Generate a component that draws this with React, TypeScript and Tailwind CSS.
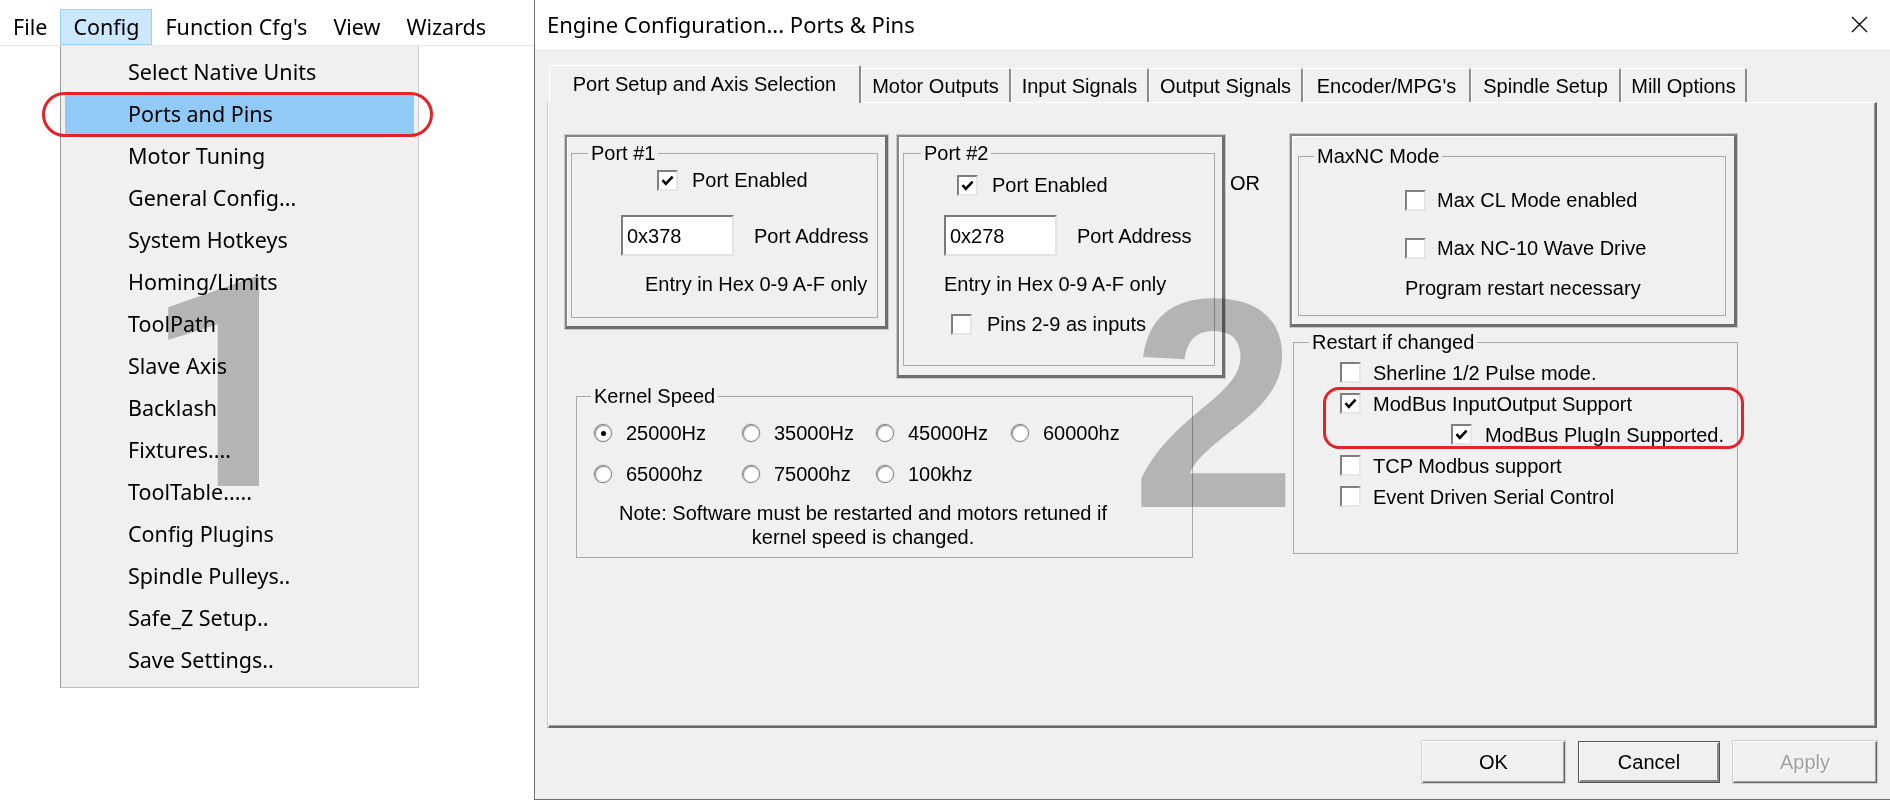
import React from "react";

const menuItems = [
  "Select Native Units",
  "Ports and Pins",
  "Motor Tuning",
  "General Config...",
  "System Hotkeys",
  "Homing/Limits",
  "ToolPath",
  "Slave Axis",
  "Backlash",
  "Fixtures....",
  "ToolTable.....",
  "Config Plugins",
  "Spindle Pulleys..",
  "Safe_Z Setup..",
  "Save Settings..",
];

function Check({ checked = false }: { checked?: boolean }) {
  return (
    <span className="w-[21px] h-[21px] shrink-0 bg-white border-2 border-t-[#7f7f7f] border-l-[#7f7f7f] border-r-[#e6e6e6] border-b-[#e6e6e6] flex items-center justify-center">
      {checked && (
        <svg width="13" height="11" viewBox="0 0 13 11">
          <path d="M1.5 5.2 L4.8 8.8 L11.6 1.6" fill="none" stroke="#000" strokeWidth="2.6" />
        </svg>
      )}
    </span>
  );
}

function Radio({ checked = false }: { checked?: boolean }) {
  return (
    <span className="w-[18px] h-[18px] shrink-0 rounded-full bg-white border border-[#808080] shadow-[inset_1px_1px_1px_#9a9a9a,0_0_0_1px_#e0e0e0] flex items-center justify-center">
      {checked && <span className="w-[5px] h-[5px] rounded-full bg-black" />}
    </span>
  );
}

function TextBox({ value }: { value: string }) {
  return (
    <div className="w-[113px] h-[41px] shrink-0 bg-white border-2 border-t-[#7a7a7a] border-l-[#7a7a7a] border-r-[#e3e3e3] border-b-[#e3e3e3] flex items-center pl-[4px]">
      {value}
    </div>
  );
}

function Tab({ label, w }: { label: string; w: number }) {
  return (
    <div
      className="h-[34px] shrink-0 flex items-center justify-center border-t border-l border-white border-r-2 border-r-[#8a8a8a] bg-[#f0f0f0] rounded-t-[2px]"
      style={{ width: w }}
    >
      {label}
    </div>
  );
}

function RadioItem({ label, checked = false }: { label: string; checked?: boolean }) {
  return (
    <div className="flex items-center h-[24px]">
      <Radio checked={checked} />
      <span className="ml-[14px]">{label}</span>
    </div>
  );
}

export default function App() {
  return (
    <div className="relative w-[1890px] h-[800px] bg-white flex overflow-hidden text-black">
      {/* Left: menu bar + dropdown */}
      <div className="w-[534px] shrink-0 flex flex-col font-['Noto_Sans',sans-serif] text-[21.5px]">
        <div className="h-[46px] pt-[9px] flex border-b border-[#e6e6e6]">
          <div className="h-[36px] px-[13px] flex items-center">File</div>
          <div className="h-[36px] px-[12px] flex items-center bg-[#cce8ff] border border-[#99d1ff]">Config</div>
          <div className="h-[36px] px-[13px] flex items-center">Function Cfg's</div>
          <div className="h-[36px] px-[13px] flex items-center">View</div>
          <div className="h-[36px] px-[13px] flex items-center">Wizards</div>
        </div>
        <div className="ml-[60px] w-[359px] h-[642px] bg-[#f0f0f0] border-l border-l-[#9a9a9a] border-r border-b border-r-[#cccccc] border-b-[#bdbdbd] pt-[5px] flex flex-col">
          {menuItems.map((m, i) => (
            <div
              key={m}
              className={
                "h-[42px] mx-[4px] pl-[63px] flex items-center " + (i === 1 ? "bg-[#91c9f7]" : "")
              }
            >
              {m}
            </div>
          ))}
        </div>
      </div>

      {/* Dialog */}
      <div className="flex-1 h-[800px] flex flex-col bg-[#f0f0f0] border-l border-[#6f6f6f] border-b border-b-[#6f6f6f]">
        <div className="h-[49px] shrink-0 bg-white flex items-center justify-between pl-[12px] pr-[22px] font-['Noto_Sans',sans-serif] text-[22px]">
          <span>Engine Configuration... Ports &amp; Pins</span>
          <svg width="17" height="17" viewBox="0 0 17 17">
            <path d="M1 1 L16 16 M16 1 L1 16" stroke="#000" strokeWidth="1.3" fill="none" />
          </svg>
        </div>

        <div className="flex-1 px-[13px] pt-[16px] flex flex-col font-['Liberation_Sans',Arial,sans-serif] text-[20px] leading-[24px]">
          {/* Tabs */}
          <div className="h-[37px] flex items-end pl-[1px] relative z-10">
            <div className="w-[312px] h-[38px] -mb-[1px] shrink-0 flex items-start pt-[6px] justify-center border-t border-l border-white border-r-2 border-r-[#8a8a8a] bg-[#f0f0f0] rounded-t-[2px]">
              Port Setup and Axis Selection
            </div>
            <Tab label="Motor Outputs" w={150} />
            <Tab label="Input Signals" w={138} />
            <Tab label="Output Signals" w={154} />
            <Tab label="Encoder/MPG's" w={168} />
            <Tab label="Spindle Setup" w={150} />
            <Tab label="Mill Options" w={126} />
          </div>

          {/* Panel */}
          <div className="h-[626px] shrink-0 border-l border-t border-white border-r-2 border-b-2 border-r-[#696969] border-b-[#696969] shadow-[inset_-1px_-1px_0_#a0a0a0,-1px_0_0_#c8c8c8] pl-[16px] pt-[32px] flex">
            {/* Left column */}
            <div className="w-[660px] shrink-0 flex flex-col">
              <div className="flex items-start gap-[9px]">
                {/* Port #1 */}
                <div className="w-[323px] h-[194px] shrink-0 border-2 border-r-[3px] border-b-[3px] border-[#858585] border-r-[#6e6e6e] border-b-[#6e6e6e] outline outline-1 outline-[#c8c8c8] shadow-[inset_1px_1px_0_#ffffff] pl-[4px] pt-[4px]">
                  <fieldset className="w-[307px] h-[177px] border border-[#a9a9a9] flex flex-col">
                    <legend className="ml-[16px] px-[3px] leading-[24px]">Port #1</legend>
                    <div className="mt-[3px] h-[24px] pl-[85px] flex items-center">
                      <Check checked />
                      <span className="ml-[14px]">Port Enabled</span>
                    </div>
                    <div className="mt-[23px] pl-[49px] flex items-center">
                      <TextBox value="0x378" />
                      <span className="ml-[20px]">Port Address</span>
                    </div>
                    <div className="mt-[16px] h-[24px] pl-[73px]">Entry in Hex 0-9 A-F only</div>
                  </fieldset>
                </div>
                {/* Port #2 */}
                <div className="w-[328px] h-[243px] shrink-0 border-2 border-r-[3px] border-b-[3px] border-[#858585] border-r-[#6e6e6e] border-b-[#6e6e6e] outline outline-1 outline-[#c8c8c8] shadow-[inset_1px_1px_0_#ffffff] pl-[4px] pt-[4px]">
                  <fieldset className="w-[312px] h-[225px] border border-[#a9a9a9] flex flex-col">
                    <legend className="ml-[17px] px-[3px] leading-[24px]">Port #2</legend>
                    <div className="mt-[8px] h-[24px] pl-[53px] flex items-center">
                      <Check checked />
                      <span className="ml-[14px]">Port Enabled</span>
                    </div>
                    <div className="mt-[18px] pl-[40px] flex items-center">
                      <TextBox value="0x278" />
                      <span className="ml-[20px]">Port Address</span>
                    </div>
                    <div className="mt-[16px] h-[24px] pl-[40px]">Entry in Hex 0-9 A-F only</div>
                    <div className="mt-[16px] h-[24px] pl-[47px] flex items-center">
                      <Check />
                      <span className="ml-[15px]">Pins 2-9 as inputs</span>
                    </div>
                  </fieldset>
                </div>
              </div>

              {/* Kernel Speed */}
              <fieldset className="mt-[6px] ml-[11px] w-[617px] h-[174px] border border-[#a9a9a9] flex flex-col">
                <legend className="ml-[14px] px-[3px] leading-[24px]">Kernel Speed</legend>
                <div className="mt-[13px] pl-[17px] grid grid-cols-[148px_134px_135px_auto] gap-y-[17px]">
                  <RadioItem label="25000Hz" checked />
                  <RadioItem label="35000Hz" />
                  <RadioItem label="45000Hz" />
                  <RadioItem label="60000hz" />
                  <RadioItem label="65000hz" />
                  <RadioItem label="75000hz" />
                  <RadioItem label="100khz" />
                </div>
                <div className="mt-[15px] ml-[16px] w-[540px] text-center leading-[24px]">
                  Note: Software must be restarted and motors retuned if
                  <br />
                  kernel speed is changed.
                </div>
              </fieldset>
            </div>

            {/* OR */}
            <div className="w-[65px] shrink-0 pl-[5px] pt-[36px]">OR</div>

            {/* Right column */}
            <div className="flex flex-col">
              <div className="-mt-[1px] w-[447px] h-[193px] shrink-0 border-2 border-r-[3px] border-b-[3px] border-[#858585] border-r-[#6e6e6e] border-b-[#6e6e6e] outline outline-1 outline-[#c8c8c8] shadow-[inset_1px_1px_0_#ffffff] pl-[6px] pt-[8px]">
                <fieldset className="w-[428px] h-[172px] border border-[#a9a9a9] flex flex-col">
                  <legend className="ml-[15px] px-[3px] leading-[24px]">MaxNC Mode</legend>
                  <div className="mt-[20px] h-[24px] pl-[106px] flex items-center">
                    <Check />
                    <span className="ml-[11px]">Max CL Mode enabled</span>
                  </div>
                  <div className="mt-[24px] h-[24px] pl-[106px] flex items-center">
                    <Check />
                    <span className="ml-[11px]">Max NC-10 Wave Drive</span>
                  </div>
                  <div className="mt-[16px] h-[24px] pl-[106px]">Program restart necessary</div>
                </fieldset>
              </div>

              <fieldset className="mt-[3px] ml-[3px] w-[445px] h-[224px] border border-[#a9a9a9] flex flex-col">
                <legend className="ml-[15px] px-[3px] leading-[24px]">Restart if changed</legend>
                <div className="mt-[3px] h-[31px] pl-[46px] flex items-center">
                  <Check />
                  <span className="ml-[12px]">Sherline 1/2 Pulse mode.</span>
                </div>
                <div className="h-[31px] pl-[46px] flex items-center">
                  <Check checked />
                  <span className="ml-[12px]">ModBus InputOutput Support</span>
                </div>
                <div className="h-[31px] pl-[157px] flex items-center">
                  <Check checked />
                  <span className="ml-[13px]">ModBus PlugIn Supported.</span>
                </div>
                <div className="h-[31px] pl-[46px] flex items-center">
                  <Check />
                  <span className="ml-[12px]">TCP Modbus support</span>
                </div>
                <div className="h-[31px] pl-[46px] flex items-center">
                  <Check />
                  <span className="ml-[12px]">Event Driven Serial Control</span>
                </div>
              </fieldset>
            </div>
          </div>

          {/* Buttons */}
          <div className="mt-[13px] flex justify-end gap-[13px]">
            <button className="w-[143px] h-[42px] bg-[#f0f0f0] border-t border-l border-white border-r border-b border-r-[#696969] border-b-[#696969] shadow-[inset_-1px_-1px_0_#a0a0a0,0_0_0_1px_#d0d0d0]">
              OK
            </button>
            <button className="w-[142px] h-[42px] bg-[#f0f0f0] border border-[#555] shadow-[inset_1px_1px_0_#ffffff,inset_-2px_-2px_0_#8a8a8a]">
              Cancel
            </button>
            <button className="w-[144px] h-[42px] bg-[#f0f0f0] text-[#a0a0a0] border-t border-l border-white border-r border-b border-r-[#696969] border-b-[#696969] shadow-[inset_-1px_-1px_0_#a0a0a0,0_0_0_1px_#d0d0d0] [text-shadow:1px_1px_0_#ffffff]">
              Apply
            </button>
          </div>
        </div>
      </div>

      {/* Overlays: annotation numerals and red highlight outlines */}
      <div className="absolute left-[144px] top-[239px] text-[294px] leading-none font-bold font-['Roboto',sans-serif] text-[#c0c0c0] mix-blend-multiply pointer-events-none select-none">
        1
      </div>
      <div className="absolute left-[1131px] top-[254px] text-[299px] leading-none font-bold font-['Liberation_Sans',Arial,sans-serif] text-[#c0c0c0] mix-blend-multiply pointer-events-none select-none">
        2
      </div>
      <div className="absolute left-[42px] top-[92px] w-[391px] h-[45px] border-[3px] border-[#e3232c] rounded-full pointer-events-none" />
      <div className="absolute left-[1323px] top-[387px] w-[421px] h-[62px] border-[3px] border-[#e3232c] rounded-[16px] pointer-events-none" />
    </div>
  );
}
